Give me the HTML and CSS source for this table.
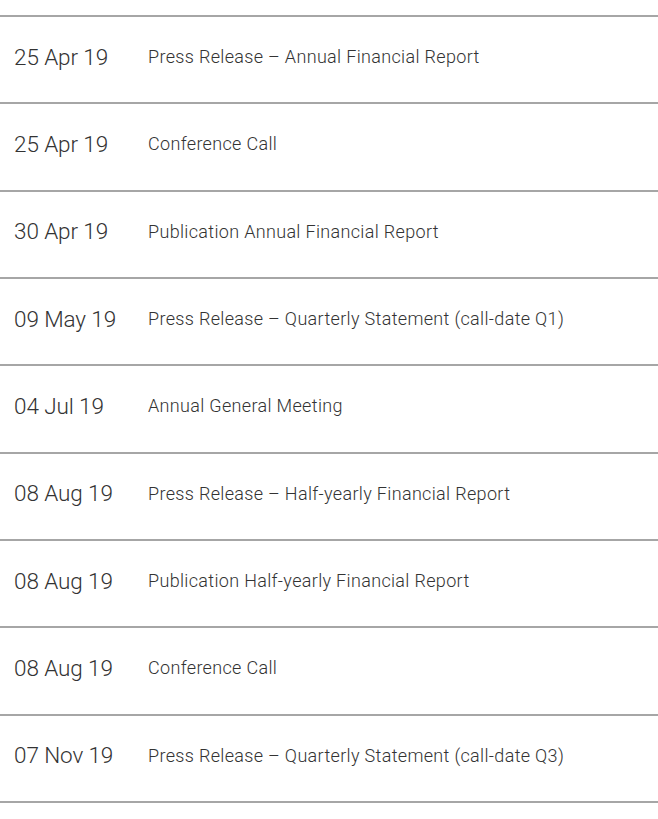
FILE: index.html
```html
<!DOCTYPE html>
<html>
<head>
<meta charset="utf-8">
<link rel="stylesheet" href="styles.css">
</head>
<body>
<ul class="events">
  <li class="event"><span class="date">25 Apr 19</span><span class="title">Press Release – Annual Financial Report</span></li>
  <li class="event"><span class="date">25 Apr 19</span><span class="title">Conference Call</span></li>
  <li class="event"><span class="date">30 Apr 19</span><span class="title">Publication Annual Financial Report</span></li>
  <li class="event"><span class="date">09 May 19</span><span class="title">Press Release – Quarterly Statement (call-date Q1)</span></li>
  <li class="event"><span class="date">04 Jul 19</span><span class="title">Annual General Meeting</span></li>
  <li class="event"><span class="date">08 Aug 19</span><span class="title">Press Release – Half-yearly Financial Report</span></li>
  <li class="event"><span class="date">08 Aug 19</span><span class="title">Publication Half-yearly Financial Report</span></li>
  <li class="event"><span class="date">08 Aug 19</span><span class="title">Conference Call</span></li>
  <li class="event"><span class="date">07 Nov 19</span><span class="title">Press Release – Quarterly Statement (call-date Q3)</span></li>
</ul>
</body>
</html>
```
FILE: styles.css
```css
html, body {
  margin: 0;
  padding: 0;
  background: #fff;
}
body {
  font-family: Roboto, "Liberation Sans", sans-serif;
  font-weight: 300;
  color: #333;
}
.events {
  list-style: none;
  margin: 0;
  padding: 15px 0 0 0;
}
.event {
  display: flex;
  align-items: center;
  height: 87.33px;
  box-sizing: border-box;
  border-top: 2px solid #a6a6a6;
  padding: 0 0 6px 14px;
}
.event:last-child {
  border-bottom: 2px solid #a6a6a6;
  height: 89.33px;
}
.date {
  width: 134px;
  flex: none;
  font-size: 22.5px;
  letter-spacing: -0.1px;
}
.title {
  font-size: 18px;
  letter-spacing: 0.33px;
}
```
